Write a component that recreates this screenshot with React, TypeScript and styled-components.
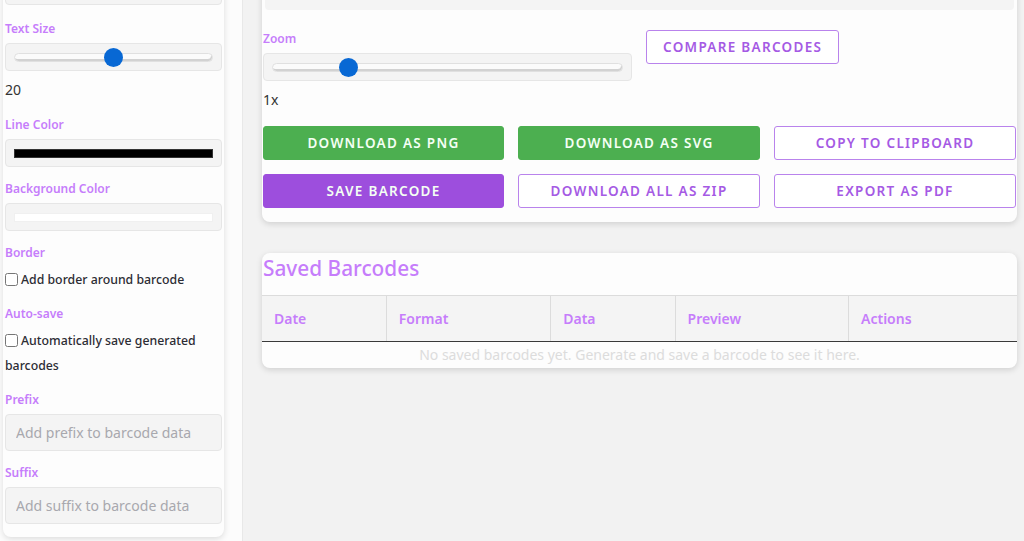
import { useLayoutEffect, useRef } from "react";
import styled, { createGlobalStyle } from "styled-components";

// ─── Theme values ─────────────────────────────────────────────────────────────

const PURPLE_LABEL = "#c67dfb";
const PURPLE_BTN = "#9d4edd";
const PURPLE_LINE = "#b983ec";
const PURPLE_TEXT = "#a55ae4";
const GREEN = "#4caf50";
const FONT = `"Noto Sans", "Open Sans", Arial, sans-serif`;

const GlobalStyle = createGlobalStyle`
  * { box-sizing: border-box; }
  html, body { margin: 0; padding: 0; height: 100%; overflow: hidden; }
  body {
    font-family: ${FONT};
    color: #333;
    background: #f2f2f2;
  }
  #root { height: 100%; }
`;

// ─── Layout ───────────────────────────────────────────────────────────────────

const Shell = styled.div`
  display: grid;
  grid-template-columns: 243px 1fr;
  height: 541px;
`;

const SidebarPane = styled.aside`
  height: 541px;
  overflow-y: auto;
  scrollbar-width: none;
  background: #fcfcfc;
  border-right: 1px solid #e8e8e8;
  padding: 16px 0 4px 3px;
  &::-webkit-scrollbar { display: none; }
`;

const SidebarCard = styled.div`
  width: 221px;
  background: #fdfdfd;
  border-radius: 0 0 8px 8px;
  box-shadow: 0 2px 6px rgba(0, 0, 0, 0.13);
  padding: 12px 2px 13px 2px;
`;

const SidebarTitle = styled.h2`
  margin: 0 0 14px;
  font-size: 18px;
  font-weight: 600;
  color: ${PURPLE_BTN};
`;

const MainPane = styled.main`
  height: 541px;
  overflow-y: auto;
  scrollbar-width: none;
  padding: 20px 7px 260px 19px;
  &::-webkit-scrollbar { display: none; }
`;

const PageTitle = styled.h1`
  margin: 0 0 16px;
  font-size: 26px;
  font-weight: 600;
  color: ${PURPLE_BTN};
`;

const Card = styled.section`
  background: #fdfdfd;
  border-radius: 8px;
  box-shadow: 0 2px 6px rgba(0, 0, 0, 0.14);
`;

const PreviewCard = styled(Card)`
  padding: 3px 1px 14px 1px;
  margin-bottom: 31px;
`;

const PreviewBox = styled.div`
  margin: 0 2px;
  height: 200px;
  background: #f4f4f4;
  border-radius: 4px;
  display: flex;
  align-items: center;
  justify-content: center;
`;

// ─── Form parts ───────────────────────────────────────────────────────────────

const Field = styled.div<{ $gap?: number }>`
  margin-bottom: ${(p) => p.$gap ?? 13}px;
`;

const Label = styled.label`
  display: block;
  font-size: 12px;
  line-height: 18px;
  font-weight: 600;
  color: ${PURPLE_LABEL};
  margin-bottom: 5px;
`;

const ControlBox = styled.div`
  height: 28px;
  background: #f4f4f4;
  border: 1px solid #e6e6e6;
  border-radius: 4px;
  padding: 0 8px;
  display: flex;
  align-items: center;
`;

const Range = styled.input.attrs({ type: "range" })`
  -webkit-appearance: none;
  appearance: none;
  width: 100%;
  height: 20px;
  margin: 0;
  background: transparent;

  &::-webkit-slider-runnable-track {
    height: 9px;
    border-radius: 5px;
    background: #fbfbfb;
    border: 1px solid #e0e0e0;
    box-shadow: inset -1px -2px 0 #d2d2d2;
  }
  &::-webkit-slider-thumb {
    -webkit-appearance: none;
    width: 19px;
    height: 19px;
    margin-top: -6px;
    border-radius: 50%;
    background: #0868d4;
    border: none;
  }
`;

const Swatch = styled.div<{ $color: string }>`
  width: 100%;
  height: 9px;
  background: ${(p) => p.$color};
  border: 1px solid ${(p) => (p.$color === "#fff" ? "#f0f0f0" : "#333")};
`;

const Value = styled.div`
  margin-top: 9px;
  font-size: 14px;
  line-height: 20px;
  color: #333;
`;

const CheckRow = styled.label`
  display: block;
  font-size: 12.3px;
  line-height: 25px;
  font-weight: 500;
  color: #2c2c34;

  input {
    width: 13px;
    height: 13px;
    margin: 0 3px 0 0;
    vertical-align: -2px;
  }
`;

const TextInput = styled.input`
  display: block;
  width: 100%;
  height: 37px;
  padding: 0 10px;
  font-family: ${FONT};
  font-size: 14px;
  color: #333;
  background: #f4f4f4;
  border: 1px solid #e6e6e6;
  border-radius: 4px;
  outline: none;

  &::placeholder { color: #a8a8ae; }
`;

const SelectBox = styled.div`
  height: 37px;
  padding: 0 10px;
  font-size: 14px;
  display: flex;
  align-items: center;
  background: #f4f4f4;
  border: 1px solid #e6e6e6;
  border-radius: 4px;
`;

// ─── Zoom row & buttons ───────────────────────────────────────────────────────

const ZoomRow = styled.div`
  display: flex;
  align-items: flex-start;
  gap: 14px;
  margin-top: 20px;
`;

const ZoomControl = styled.div`
  width: 369px;
`;

const ButtonGrid = styled.div`
  display: grid;
  grid-template-columns: 241px 242px 242px;
  column-gap: 14px;
  row-gap: 14px;
  margin-top: 16px;
`;

const Button = styled.button<{ $variant: "green" | "purple" | "outline" }>`
  height: 34px;
  padding: 0 16px;
  border-radius: 3px;
  font-family: ${FONT};
  font-size: 13.5px;
  font-weight: 600;
  letter-spacing: 1.3px;
  text-transform: uppercase;
  cursor: pointer;
  border: 1.5px solid
    ${(p) => (p.$variant === "green" ? GREEN : p.$variant === "purple" ? PURPLE_BTN : PURPLE_LINE)};
  background: ${(p) => (p.$variant === "green" ? GREEN : p.$variant === "purple" ? PURPLE_BTN : "#fff")};
  color: ${(p) => (p.$variant === "outline" ? PURPLE_TEXT : "#f4fff4")};
`;

// ─── Saved table ──────────────────────────────────────────────────────────────

const SavedCard = styled(Card)`
  padding-top: 2px;
  overflow: hidden;
`;

const SavedTitle = styled.h2`
  margin: 0 0 14px 1px;
  font-size: 20.8px;
  line-height: 26px;
  font-weight: 500;
  color: ${PURPLE_LABEL};
`;

const Table = styled.table`
  width: 100%;
  border-collapse: collapse;
  table-layout: fixed;
`;

const Th = styled.th<{ $w: number }>`
  width: ${(p) => p.$w}px;
  height: 46px;
  padding: 0 12px;
  text-align: left;
  font-size: 14px;
  font-weight: 600;
  color: ${PURPLE_LABEL};
  background: #f4f4f4;
  border: 1px solid #dcdcdc;
  border-bottom: 1.5px solid #3a3a3a;
  &:first-child { border-left: none; }
  &:last-child { border-right: none; }
`;

const EmptyCell = styled.td`
  height: 26px;
  text-align: center;
  font-size: 14px;
  color: #dcdcdc;
`;

const columns = [
  { label: "Date", w: 124 },
  { label: "Format", w: 164 },
  { label: "Data", w: 124 },
  { label: "Preview", w: 173 },
  { label: "Actions", w: 168 },
];

function Slider({ min, max, step, value }: { min: number; max: number; step: number; value: number }) {
  return (
    <ControlBox>
      <Range min={min} max={max} step={step} defaultValue={value} />
    </ControlBox>
  );
}

function Bars() {
  const widths = [2, 1, 3, 1, 2, 2, 1, 3, 1, 1, 2, 3, 1, 2, 1, 1, 3, 2, 1, 2];
  let x = 0;
  return (
    <svg width="220" height="90" viewBox="0 0 220 90">
      {widths.map((w, i) => {
        const r = <rect key={i} x={x} y={0} width={w * 3} height={90} fill="#000" />;
        x += w * 3 + 4;
        return r;
      })}
    </svg>
  );
}

export default function App() {
  const sideRef = useRef<HTMLElement>(null);
  const mainRef = useRef<HTMLElement>(null);
  const previewRef = useRef<HTMLDivElement>(null);

  // sidebar sits scrolled to its end; main pane scrolled past the preview
  useLayoutEffect(() => {
    const side = sideRef.current;
    if (side) side.scrollTop = side.scrollHeight;
    const main = mainRef.current;
    const preview = previewRef.current;
    if (main && preview) {
      const offset = preview.getBoundingClientRect().bottom - main.getBoundingClientRect().top;
      main.scrollTop = offset - 10;
    }
  }, []);

  return (
    <>
      <GlobalStyle />
      <Shell>
        <SidebarPane ref={sideRef}>
          <SidebarCard>
            <SidebarTitle>Barcode Settings</SidebarTitle>
            <Field>
              <Label>Barcode Format</Label>
              <SelectBox>CODE128</SelectBox>
            </Field>
            <Field>
              <Label>Barcode Data</Label>
              <TextInput defaultValue="123456789" />
            </Field>
            <Field>
              <Label>Width</Label>
              <Slider min={1} max={4} step={1} value={2} />
              <Value>2</Value>
            </Field>
            <Field $gap={15}>
              <Label>Font</Label>
              <SelectBox>Monospace</SelectBox>
            </Field>

            <Field $gap={16}>
              <Label>Text Size</Label>
              <Slider min={10} max={30} step={1} value={20} />
              <Value>20</Value>
            </Field>
            <Field>
              <Label>Line Color</Label>
              <ControlBox>
                <Swatch $color="#000" />
              </ControlBox>
            </Field>
            <Field>
              <Label>Background Color</Label>
              <ControlBox>
                <Swatch $color="#fff" />
              </ControlBox>
            </Field>
            <Field>
              <Label>Border</Label>
              <CheckRow>
                <input type="checkbox" />
                Add border around barcode
              </CheckRow>
            </Field>
            <Field>
              <Label>Auto-save</Label>
              <CheckRow>
                <input type="checkbox" />
                Automatically save generated barcodes
              </CheckRow>
            </Field>
            <Field>
              <Label>Prefix</Label>
              <TextInput placeholder="Add prefix to barcode data" />
            </Field>
            <Field $gap={0}>
              <Label>Suffix</Label>
              <TextInput placeholder="Add suffix to barcode data" />
            </Field>
          </SidebarCard>
        </SidebarPane>

        <MainPane ref={mainRef}>
          <PageTitle>Barcode Generator</PageTitle>
          <PreviewCard>
            <PreviewBox ref={previewRef}>
              <Bars />
            </PreviewBox>

            <ZoomRow>
              <ZoomControl>
                <Label>Zoom</Label>
                <Slider min={0.5} max={3} step={0.1} value={1} />
                <Value>1x</Value>
              </ZoomControl>
              <Button $variant="outline">Compare Barcodes</Button>
            </ZoomRow>

            <ButtonGrid>
              <Button $variant="green">Download as PNG</Button>
              <Button $variant="green">Download as SVG</Button>
              <Button $variant="outline">Copy to Clipboard</Button>
              <Button $variant="purple">Save Barcode</Button>
              <Button $variant="outline">Download All as ZIP</Button>
              <Button $variant="outline">Export as PDF</Button>
            </ButtonGrid>
          </PreviewCard>

          <SavedCard>
            <SavedTitle>Saved Barcodes</SavedTitle>
            <Table>
              <thead>
                <tr>
                  {columns.map((c) => (
                    <Th key={c.label} $w={c.w}>
                      {c.label}
                    </Th>
                  ))}
                </tr>
              </thead>
              <tbody>
                <tr>
                  <EmptyCell colSpan={5}>
                    No saved barcodes yet. Generate and save a barcode to see it here.
                  </EmptyCell>
                </tr>
              </tbody>
            </Table>
          </SavedCard>
        </MainPane>
      </Shell>
    </>
  );
}
